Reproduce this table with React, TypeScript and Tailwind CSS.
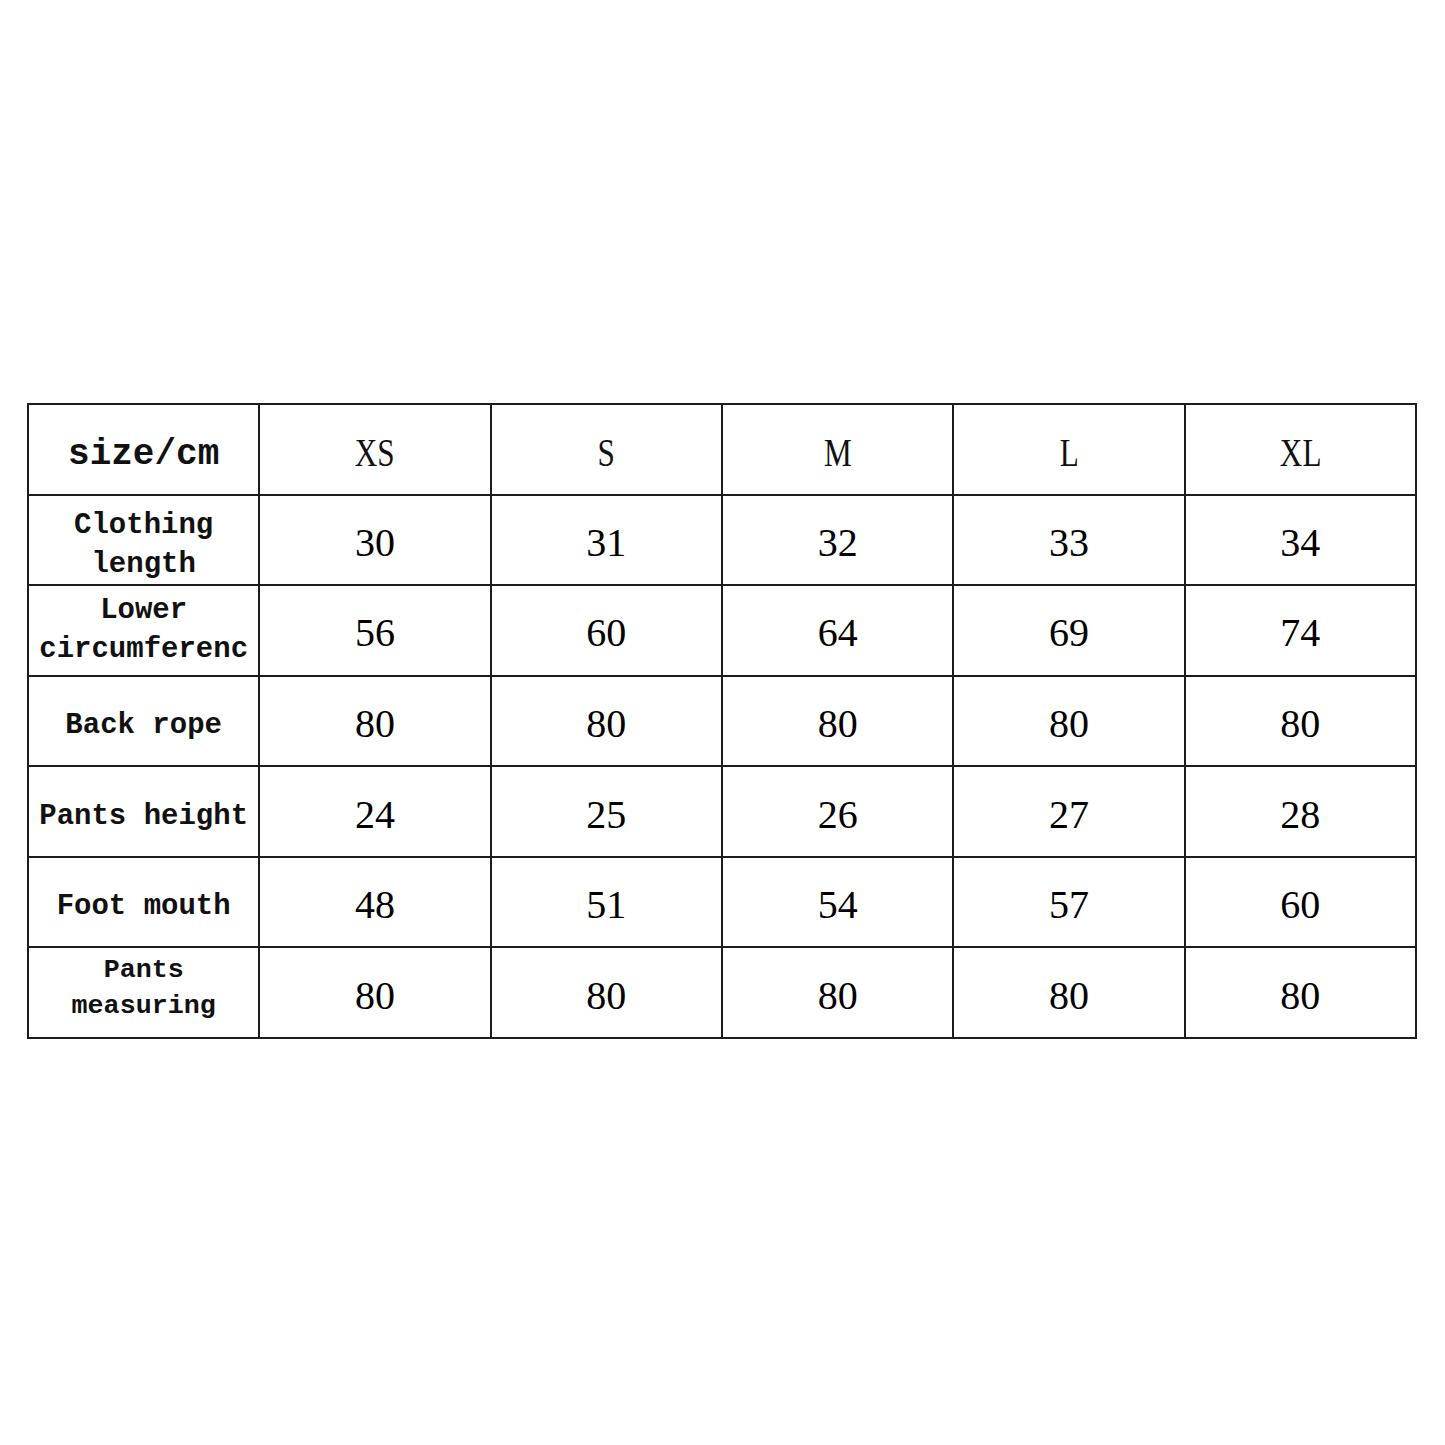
const sizes = ["XS", "S", "M", "L", "XL"];

type Row = { label: string[]; small?: boolean; pad: string; values: number[] };

const rows: Row[] = [
  { label: ["Clothing", "length"], pad: "pt-[10px]", values: [30, 31, 32, 33, 34] },
  { label: ["Lower", "circumferenc"], pad: "pt-[0px]", values: [56, 60, 64, 69, 74] },
  { label: ["Back rope"], pad: "pt-[9px]", values: [80, 80, 80, 80, 80] },
  { label: ["Pants height"], pad: "pt-[9px]", values: [24, 25, 26, 27, 28] },
  { label: ["Foot mouth"], pad: "pt-[9px]", values: [48, 51, 54, 57, 60] },
  { label: ["Pants", "measuring"], small: true, pad: "pb-[9px]", values: [80, 80, 80, 80, 80] },
];

const cell =
  "flex flex-col items-center justify-center border-r-2 border-b-2 border-[#1c1c1c] text-[#111]";

export default function App() {
  return (
    <div className="min-h-[1445px] w-[1445px] bg-white pt-[403px] pl-[27px]">
      <div className="grid h-[636px] w-[1390px] grid-cols-6 grid-rows-7 border-l-2 border-t-2 border-[#1c1c1c]">
        <div className={cell}>
          <span className="pt-[12px] font-['Liberation_Mono',monospace] text-[36px] font-bold leading-none">
            size/cm
          </span>
        </div>
        {sizes.map((s) => (
          <div key={s} className={cell}>
            <span className="inline-block scale-x-[0.78] pt-[8px] font-['Liberation_Serif',serif] text-[40px] leading-none">
              {s}
            </span>
          </div>
        ))}
        {rows.map((r) => (
          <>
            <div key={r.label.join(" ")} className={cell + " " + r.pad}>
              {r.label.map((line) => (
                <span
                  key={line}
                  className={
                    r.small
                      ? "whitespace-pre font-['Liberation_Mono',monospace] text-[26.7px] font-bold leading-[36px]"
                      : "whitespace-pre font-['Liberation_Mono',monospace] text-[29px] font-bold leading-[39px]"
                  }
                >
                  {line}
                </span>
              ))}
            </div>
            {r.values.map((v, i) => (
              <div key={r.label.join(" ") + i} className={cell}>
                <span className="pt-[6px] font-['Liberation_Serif',serif] text-[40px] leading-none text-black">
                  {v}
                </span>
              </div>
            ))}
          </>
        ))}
      </div>
    </div>
  );
}
